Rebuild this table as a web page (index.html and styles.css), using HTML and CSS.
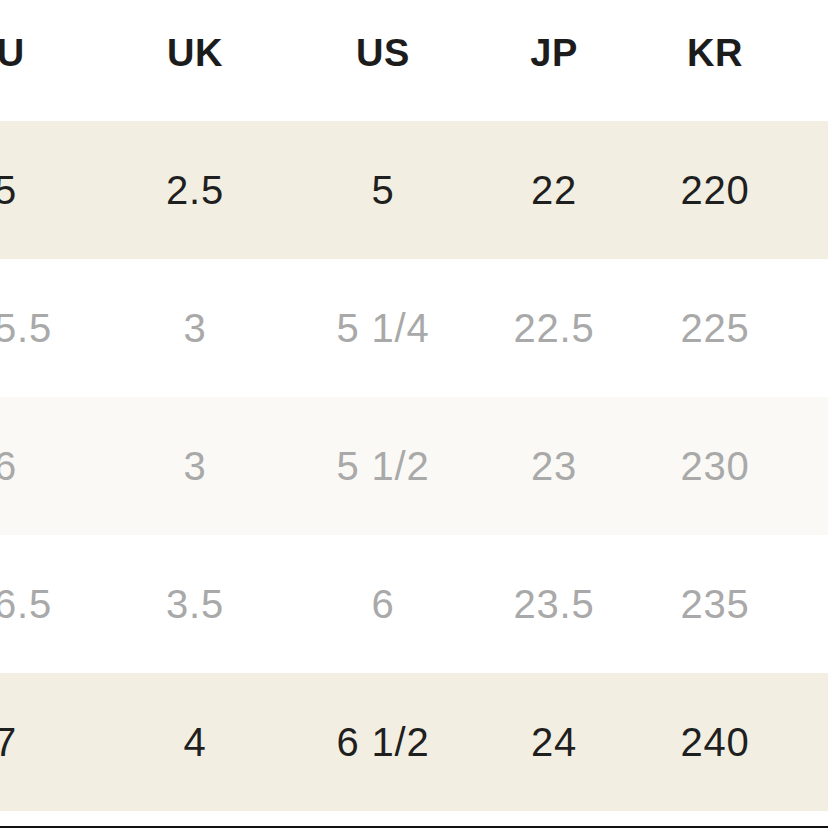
FILE: index.html
```html
<!DOCTYPE html>
<html>
<head>
<meta charset="utf-8">
<link rel="stylesheet" href="styles.css">
</head>
<body>
<div class="chart">
  <div class="row head">
    <div class="cell">EU</div><div class="cell">UK</div><div class="cell">US</div><div class="cell">JP</div><div class="cell">KR</div><div class="cell"></div>
  </div>
  <div class="row beige">
    <div class="cell">35</div><div class="cell">2.5</div><div class="cell">5</div><div class="cell">22</div><div class="cell">220</div><div class="cell"></div>
  </div>
  <div class="row white muted">
    <div class="cell">35.5</div><div class="cell">3</div><div class="cell">5 1/4</div><div class="cell">22.5</div><div class="cell">225</div><div class="cell"></div>
  </div>
  <div class="row light muted">
    <div class="cell">36</div><div class="cell">3</div><div class="cell">5 1/2</div><div class="cell">23</div><div class="cell">230</div><div class="cell"></div>
  </div>
  <div class="row white muted">
    <div class="cell">36.5</div><div class="cell">3.5</div><div class="cell">6</div><div class="cell">23.5</div><div class="cell">235</div><div class="cell"></div>
  </div>
  <div class="row beige">
    <div class="cell">37</div><div class="cell">4</div><div class="cell">6 1/2</div><div class="cell">24</div><div class="cell">240</div><div class="cell"></div>
  </div>
  <div class="foot"></div>
</div>
</body>
</html>
```

FILE: styles.css
```css
html, body {
  margin: 0;
  padding: 0;
  background: #ffffff;
  overflow: hidden;
  width: 828px;
  height: 828px;
}

.chart {
  margin-left: -100px;
  width: 1028px;
  font-family: "Liberation Sans", Arial, sans-serif;
  color: #1f1f1f;
}

.row {
  display: grid;
  grid-template-columns: 196px 198px 178px 164px 158px 134px;
  height: 138px;
  align-items: center;
}

.cell {
  text-align: center;
  font-size: 40px;
  line-height: 1;
  letter-spacing: 0.8px;
  white-space: nowrap;
}

.cell:first-child {
  text-align: left;
  padding-left: 71px;
}

.head {
  height: 121px;
  padding-bottom: 16px;
  box-sizing: border-box;
}

.head .cell {
  font-weight: bold;
  font-size: 38px;
  letter-spacing: 0.5px;
  color: #1c1c1c;
}

.beige {
  background: #f2efe2;
}

.white {
  background: #ffffff;
}

.light {
  background: #faf9f5;
}

.muted .cell {
  color: #a9a9a9;
}

.foot {
  height: 15px;
  border-bottom: 2px solid #111111;
}
```
